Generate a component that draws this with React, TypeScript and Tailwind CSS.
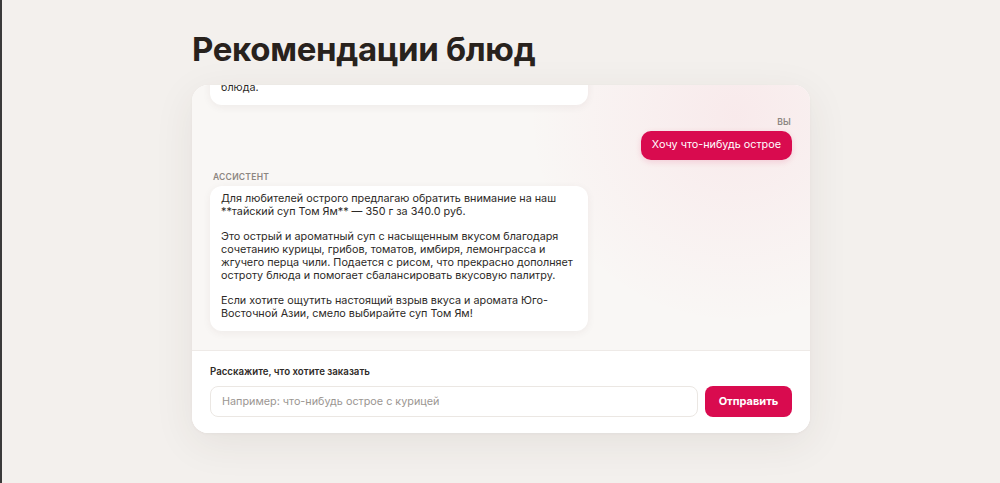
import { type ReactNode } from 'react';

interface Message {
  role: 'user' | 'assistant';
  text: string[];
}

const messages: Message[] = [
  {
    role: 'assistant',
    text: [
      'Здравствуйте! Я помогу выбрать что-нибудь вкусное из нашего меню.\nРасскажите, что вам хочется, и я подберу для вас подходящие\nблюда.',
    ],
  },
  { role: 'user', text: ['Хочу что-нибудь острое'] },
  {
    role: 'assistant',
    text: [
      'Для любителей острого предлагаю обратить внимание на наш **тайский суп Том Ям** — 350 г за 340.0 руб.',
      'Это острый и ароматный суп с насыщенным вкусом благодаря сочетанию курицы, грибов, томатов, имбиря, лемонграсса и жгучего перца чили. Подается с рисом, что прекрасно дополняет остроту блюда и помогает сбалансировать вкусовую палитру.',
      'Если хотите ощутить настоящий взрыв вкуса и аромата Юго-Восточной Азии, смело выбирайте суп Том Ям!',
    ],
  },
];

function Label({ children, right }: { children: ReactNode; right?: boolean }) {
  return (
    <div
      className={`text-[8.5px] leading-[10px] font-semibold uppercase tracking-[0.03em] text-[#8c8681] mb-[4px] ${
        right ? 'text-right pr-[1px]' : 'pl-[3px]'
      }`}
    >
      {children}
    </div>
  );
}

function Bubble({ msg }: { msg: Message }) {
  if (msg.role === 'user') {
    return (
      <div className="flex flex-col items-end">
        <Label right>Вы</Label>
        <div className="flex h-[29px] items-center rounded-[10px] bg-[#d90b4f] px-[11px] text-[10.8px] text-white shadow-[0_2px_6px_rgba(217,11,79,0.15)]">
          {msg.text[0]}
        </div>
      </div>
    );
  }
  return (
    <div className="flex flex-col items-start">
      <Label>Ассистент</Label>
      <div className="w-[378px] whitespace-pre-line rounded-[12px] bg-white px-[11px] pt-[7px] pb-[10px] text-[10.8px] leading-[12.8px] text-[#2d2a27] shadow-[0_2px_8px_rgba(60,40,30,0.06)]">
        {msg.text.map((p, i) => (
          <p key={i} className={i > 0 ? 'mt-[12.8px]' : ''}>
            {p}
          </p>
        ))}
      </div>
    </div>
  );
}

export default function App() {
  return (
    <div
      className="min-h-[483px] h-[483px] overflow-hidden bg-[#f3f0ed] border-l-2 border-[#3a3a3a]"
      style={{ fontFamily: 'Inter, "Noto Sans", sans-serif' }}
    >
      <div className="mx-auto w-[618px] pt-[28px]">
        <h1 className="text-[33px] leading-[42px] font-bold tracking-[-0.01em] text-[#28221d] mb-[15px]">
          Рекомендации блюд
        </h1>

        <div className="overflow-hidden rounded-[16px] bg-white shadow-[0_10px_40px_rgba(70,50,40,0.08),0_1px_3px_rgba(70,50,40,0.04)]">
          {/* Chat area */}
          <div className="relative h-[265px] overflow-hidden bg-[#f9f7f5]">
            <div className="absolute inset-0 bg-[radial-gradient(circle_at_88%_12%,rgba(240,80,120,0.08),transparent_35%)]" />
            <div className="relative flex h-full flex-col justify-end gap-[12px] px-[18px] pb-[19px]">
              {messages.map((m, i) => (
                <Bubble key={i} msg={m} />
              ))}
            </div>
          </div>

          {/* Input area */}
          <div className="border-t border-[#eeeae7] bg-white px-[18px] pt-[14px] pb-[16px]">
            <div className="mb-[6px] text-[9.7px] font-semibold text-[#2f2b28]">
              Расскажите, что хотите заказать
            </div>
            <div className="flex gap-[7px]">
              <input
                className="h-[31px] flex-1 rounded-[8px] border border-[#ebe7e3] bg-white px-[11px] text-[10.8px] text-[#2d2a27] outline-none placeholder:text-[#9b9692]"
                placeholder="Например: что-нибудь острое с курицей"
              />
              <button className="h-[31px] w-[87px] rounded-[8px] bg-[#d90b4f] text-[11px] font-bold text-white">
                Отправить
              </button>
            </div>
          </div>
        </div>
      </div>
    </div>
  );
}
